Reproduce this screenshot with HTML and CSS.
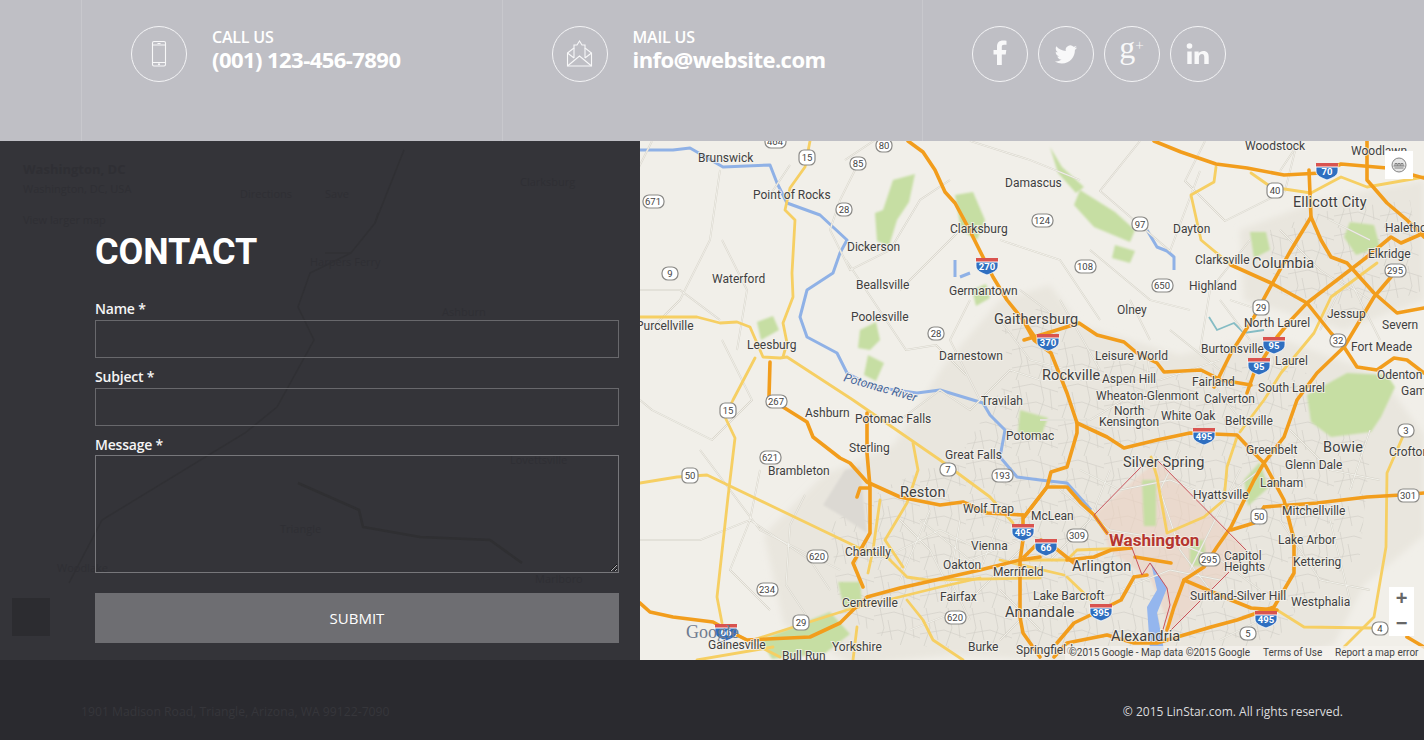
FILE: index.html
```html
<!DOCTYPE html>
<html lang="en">
<head>
<meta charset="utf-8">
<title>Contact</title>
<link rel="stylesheet" href="styles.css">
</head>
<body>
<header class="topbar">
  <div class="col">
    <span class="ring"><svg class="ico" viewBox="0 0 54 54"><rect x="20.500" y="14.500" width="13" height="24.500" rx="1.500"/><path d="M25.500 16.500h3M20.500 18h13M20.500 35.500h13"/><circle cx="27" cy="37.200" r=".5"/></svg></span>
    <div class="info"><div class="info-small">CALL US</div><div class="info-big">(001) 123-456-7890</div></div>
  </div>
  <div class="col">
    <span class="ring"><svg class="ico" viewBox="0 0 54 54"><path d="M14.500 26L21 21V18H24L26.500 14 29 18H32V21L38.500 26V39H14.500Z"/><path d="M14.500 26L21 31M38.500 26L32 31M21 21V31M32 21V31M14.500 39L26.500 29 38.500 39"/></svg></span>
    <div class="info"><div class="info-small">MAIL US</div><div class="info-big">info@website.com</div></div>
  </div>
  <div class="col social">
    <span class="ring"><svg class="glyph" viewBox="0 0 54 54"><path d="M24 38V27.500h-3.500V23H24v-3.500c0-4 2.400-6 6-6 1.600 0 3 .1 3.500.2v4.100h-2.400c-1.900 0-2.300.9-2.300 2.200V23h4.500l-.6 4.500h-3.900V38z"/></svg></span>
    <span class="ring"><svg class="glyph" viewBox="-17 -17.500 58 58"><path d="M23.953 4.570a10 10 0 01-2.825.775 4.958 4.958 0 002.163-2.723c-.951.555-2.005.959-3.127 1.184a4.920 4.920 0 00-8.384 4.482C7.690 8.095 4.067 6.130 1.640 3.162a4.822 4.822 0 00-.666 2.475c0 1.710.870 3.213 2.188 4.096a4.904 4.904 0 01-2.228-.616v.060a4.923 4.923 0 003.946 4.827 4.996 4.996 0 01-2.212.085 4.936 4.936 0 004.604 3.417 9.867 9.867 0 01-6.102 2.105c-.390 0-.779-.023-1.170-.067a13.995 13.995 0 007.557 2.209c9.053 0 13.998-7.496 13.998-13.985 0-.210 0-.420-.015-.630A9.935 9.935 0 0024 4.590z"/></svg></span>
    <span class="ring gplus">g<small>+</small></span>
    <span class="ring"><svg class="glyph" viewBox="0 0 54 54"><circle cx="18.500" cy="19" r="2.800"/><path d="M16.300 24.500h4.400V37h-4.400zM23.500 24.500h4.200v1.900c.9-1.400 2.600-2.300 4.600-2.300 4.100 0 5.400 2.500 5.400 6V37h-4.400v-6.600c0-1.900-.5-3.300-2.300-3.300-1.900 0-3.100 1.300-3.100 3.300V37h-4.400z"/></svg></span>
  </div>
</header>

<main class="main">
  <section class="panel">
    <svg class="ghost" viewBox="0 0 640 519" aria-hidden="true">
      <g class="ghost-roads">
        <path d="M404 9L375 82 351 112 310 132 298 166 314 199 277 266 245 292 102 379 69 442"/>
        <path class="ghost-main" d="M298 342L359 369 363 386 420 396 490 399 522 422"/>
        <path d="M351 112H325M375 82l3-10"/>
      </g>
      <g class="ghost-text">
        <text class="ghost-title" x="23" y="33">Washington, DC</text>
        <text x="23" y="52">Washington, DC, USA</text>
        <text x="23" y="83">View larger map</text>
        <text x="240" y="57">Directions</text>
        <text x="325" y="57">Save</text>
        <text x="520" y="45">Clarksburg</text>
        <text x="310" y="125">Harpers Ferry</text>
        <text x="442" y="175">Ashburn</text>
        <text x="510" y="323">Lovettsville</text>
        <text x="280" y="392">Triangle</text>
        <text x="57" y="431">Woodlake</text>
        <text x="535" y="442">Marlboro</text>
      </g>
      <rect class="ghost-box" x="12" y="457" width="38" height="38"/>
    </svg>
    <form class="form">
      <h1 class="title">CONTACT</h1>
      <label class="lab" for="f-name">Name *</label>
      <input class="field" id="f-name" type="text">
      <label class="lab" for="f-subject">Subject *</label>
      <input class="field" id="f-subject" type="text">
      <label class="lab lab-last" for="f-message">Message *</label>
      <textarea class="area" id="f-message"></textarea>
      <button class="submit" type="button">SUBMIT</button>
    </form>
  </section>

  <section class="map">
    <svg class="map-svg" viewBox="640 141 784 519">
      <defs>
        <filter id="blur" x="-20%" y="-20%" width="140%" height="140%"><feGaussianBlur stdDeviation="3"/></filter>
        <filter id="soft" x="-20%" y="-20%" width="140%" height="140%"><feGaussianBlur stdDeviation="1"/></filter>
        <pattern id="streets" width="46" height="38" patternUnits="userSpaceOnUse">
          <path class="street-lines" d="M0 8L20 4 46 12M6 0L10 20 4 38M0 26L24 22 46 30M28 0L32 20 26 38M14 12L18 32M38 10L40 30"/>
        </pattern>
        <g id="ih"><path class="ih-b" d="M-11-6H11V1C11 6 5 8 0 10-5 8-11 6-11 1z"/><path class="ih-r" d="M-11-7H11V-3H-11z"/><path class="ih-w" d="M-11-3H11"/></g>
        <g id="mn">
          <path d="M652 141l-15 30M720 170l-10 70-30 60-30 30M722 240l25 50-10 60M790 165l-20 30M845 160l30-20M860 160l-20 40-10 30 20 40 40-20 30-50 30-20M846 260l40 60 20 30 30-5 30 30M900 290l60-60M640 290l40 0 40 30M722 340l30 60-40 40-60-30-12-10M700 450l60 80 80 40M640 540l60 0 50-20 60 40 20 30M760 470l-10 50-20 50 40 40M805 495l-15 30-4 60 20 30M900 420l40-30 30 20 40-40 30 10M970 300l-20 40 30 60M1060 300l40 70M1090 250l60 50 40 10M1080 180l-50-20-60-19M1140 141l-40 50 70 60 30-80M1000 240l60 20 40 60M1130 300l20 40M1205 141l-20 40 40 40 60-30 10-40M1250 240l-40 50-10 60M1170 330l50 40M1220 300l30 40M1280 230l40 40 30 20M1300 141l-20 30M1350 280l30 60M1370 430l-20 60M1290 430l40 40 50 10M1280 520l40 60 50 10M1330 520l20 80M1220 640l40-20M1000 640l30-30 40-10M970 600l50-50M910 630l50-20M920 520l50 40 50-20"/>
          <path d="M1080 470l40 20 50-10 50 20 40-30M1060 490l50 40 60 10 50 20 40 30M1110 470l-20 50-40 40M1180 450l-20 40 20 60 30 40M1240 470l-30 60-20 40M1120 590l50-20 50 10M900 520l30 30 20 40M930 510l-30 70M960 520l-10 60 20 40M1000 520l-20 50M1000 590l40 40M880 560l60-30 40 20M1040 420l50 0 50-30M1080 380l80 0 60-20M1150 350l-10 80M1210 380l30 40M1230 300l30 10M1330 220l40 20M1340 280l30 20M1340 290l-20 40M1020 290l40 30M1000 320l30 40 40 10"/>
        </g>
      </defs>

      <rect x="640" y="141" width="784" height="519" class="land"/>

      <g class="urban" filter="url(#blur)">
        <path d="M1000 300l50-15 30 40 100 30 90-20 110 40 44 60v100l-60 50-30 60-60 20-150 0-170-10-100 10-70-40-20-90 60-60 70-30 50-80z"/>
        <path d="M1240 230l80-30 104-20v120l-80 30-100-30z"/>
      </g>
      <g fill="url(#streets)">
        <path d="M1000 320l50-15 30 40 100 30 90-20 80 40 20 60-10 100-60 50-20 30-60 20-150 0-170-10-60-30-10-90 60-40 70-30 50-80z"/>
        <path d="M1270 230l60-20 80-10 14 90-80 30-70-30z"/>
      </g>
      <path class="dc" d="M1094 515l63-55 89 90-17 22-58 58-20-50-42-30-7-25z" filter="url(#soft)"/>
      <path class="airport" d="M860 467L867 533 840 515 823 505 845 470Z" filter="url(#soft)"/>

      <g class="green" filter="url(#soft)">
        <path d="M893 180l22-6-6 28-12 18-8 26-12-5-2-28 8-3z"/>
        <path d="M955 195l18-3 12 28-8 20-16-10z"/>
        <path d="M1080 190l35 22 20 18-5 12-36-15-20-22z"/>
        <path d="M1050 147l12 20 22 20-8 6-18-20z"/>
        <path d="M1115 245l20 6-5 12-18-5z"/>
        <path d="M860 330l16-8 4 18-10 10-12-2z"/>
        <path d="M757 322l16-6 6 14-18 10z"/>
        <path d="M1307 395l40-22 40 2 8 12-14 30-10 15-40 5-20-15z"/>
        <path d="M1350 222l24 3 6 22-24 8-12-18z"/>
        <path d="M1250 232l16 0 4 18-16 8z"/>
        <path d="M760 640l70-28 20 22-26 20-52 5z"/>
        <path d="M838 582l22 0 2 22-18 5z"/>
        <path d="M1190 540l14 0 2 26-16 0z"/>
        <path d="M1142 480l14 0 0 46-12 0z"/>
        <path d="M1244 480l16-18 8 26-20 18z"/>
        <path d="M1020 410l28 8-8 20-22-5z"/>
        <path d="M868 355l16 8-8 18-12-6z"/>
        <path d="M972 290l14-6 4 14-14 8z"/>
      </g>

      <g class="water-thin">
        <path d="M640 150L673 150 690 148 723 167 770 165 777 183 787 203 820 215 847 240 840 253 833 273 807 290 800 317 807 337 837 353 847 373 873 387 917 393 940 390 983 403 990 415 1005 430 1000 457 1017 477 1040 480 1067 483 1091 510"/>
      </g>
      <g class="water">
        <path d="M1147 230l10 17 10 4 7 6 0 13"/>
        <path d="M955 260v17M960 277l10-4"/>
      </g>
      <path class="water-teal" d="M1209 317L1217 330 1234 323 1244 333 1264 330"/>
      <path class="water-fill" d="M1151 563L1167 588 1157 613 1164 650 1150 650 1147 607 1157 590Z"/>

      <use href="#mn" class="minor-case"/>
      <use href="#mn" class="minor-fill"/>

      <g class="yellow">
        <path d="M810 141L805 167 790 188 785 210 795 220 792 273 793 297 783 323 787 343 783 357"/>
        <path d="M640 317H697L720 323 737 322 750 327 763 357 780 358 787 357 853 400 940 460 990 497 1013 523"/>
        <path d="M755 358L733 400 725 417 735 438 728 497 717 597 722 623"/>
        <path d="M640 483L677 477 707 475 857 547 887 557 907 577 927 580 1040 578"/>
        <path d="M753 640L847 610 940 587 980 578"/>
        <path d="M913 443L918 470 907 503 885 540 903 567M880 500L873 550 868 573M857 627L853 660M907 600L923 620 933 640 963 660"/>
        <path d="M697 660L773 647M733 633L780 657"/>
        <path d="M1216 167L1214 182 1191 195 1201 240 1231 265"/>
        <path d="M1251 173L1271 187 1311 193 1341 177 1367 187 1424 177"/>
        <path d="M1377 263L1331 297 1314 333 1281 373 1264 400 1240 432"/>
        <path d="M1237 437L1227 467 1224 500 1204 517 1167 533 1157 477 1151 457"/>
        <path d="M1407 427L1387 473 1386 547 1374 617 1344 647"/>
        <path d="M1277 610L1304 627 1371 628"/>
        <path d="M1024 560H1067L1077 550 1131 548M1067 577L1091 600M1000 560L1064 575"/>
      </g>
      <g class="orange">
        <path d="M908 141L923 152 935 170 945 192 955 203 968 227 983 257 993 277 1007 300 1023 320 1037 340"/>
        <path d="M1024 322L1034 340 1051 353 1067 393 1077 423 1077 433 1067 467 1051 472 1047 487 1024 517"/>
        <path d="M1077 423L1107 437 1124 448 1157 440 1190 433 1237 435 1251 450 1264 463 1284 500 1294 540 1294 573 1274 607 1257 613 1237 620 1211 627 1184 635 1157 643 1134 643 1107 635 1067 643 1054 657"/>
        <path d="M1040 557L1020 560 980 570 900 588 867 597 853 610 840 623 810 637 747 640 733 633 713 622 673 617 650 612 640 603"/>
        <path d="M783 407L807 422 813 437 840 458 850 463 867 482 900 497 940 505 963 502 987 513 1023 515"/>
        <path d="M867 413V453L870 487V533L853 563 863 587M857 497L860 488H870M770 362L769 397"/>
        <path d="M1154 141L1181 152 1216 164 1247 168 1284 175 1321 173 1341 164 1387 168 1424 178"/>
        <path d="M1367 141V180L1387 203 1407 220 1424 237"/>
        <path d="M1309 170L1311 217 1291 250 1267 293 1254 317 1231 353 1214 387"/>
        <path d="M1311 217L1321 240 1331 257 1347 263 1374 293 1397 313 1424 308"/>
        <path d="M1231 265L1271 283 1307 303 1331 333 1344 347 1357 367 1377 370 1394 358 1407 360 1424 373"/>
        <path d="M1391 277L1374 297 1344 347 1317 373 1297 400 1284 437 1264 463 1254 480 1231 527 1217 547 1204 567 1184 580 1174 607 1167 630"/>
        <path d="M1367 257L1307 303 1291 320 1277 337 1254 373 1247 393"/>
        <path d="M1367 257L1391 237 1401 243 1424 233"/>
        <path d="M1024 340L1057 330 1079 323 1097 335 1124 342 1137 353 1157 363 1164 372 1201 370 1221 380 1251 385"/>
        <path d="M1264 507L1317 503 1367 497 1401 495 1424 493M1231 530L1254 523 1264 507"/>
        <path d="M1184 580L1231 600 1251 608 1277 610M1407 637L1424 647"/>
        <path d="M1024 517L1047 487H1067L1081 503 1094 515 1107 533"/>
        <path d="M1067 560L1094 557 1111 550 1131 548M1134 577L1121 600 1101 610 1074 623 1057 643M1134 577L1147 575M1171 563L1135 557"/>
        <path d="M1023 515V540L1020 560V617L1023 633 1040 657M1024 557L1041 540 1054 547 1074 563"/>
      </g>

      <path class="dc-line" d="M1094 515L1141 467M1157 460L1246 550M1229 572L1171 630M1094 515L1107 533 1132 548 1142 575 1150 563 1167 588 1170 605 1160 640"/>

      <g class="lbl">
        <text x="1245" y="150">Woodstock</text><text x="1351" y="155">Woodlawn</text>
        <text x="698" y="162">Brunswick</text><text x="753" y="199">Point of Rocks</text>
        <text x="1005" y="187">Damascus</text><text x="950" y="233">Clarksburg</text>
        <text x="847" y="251">Dickerson</text><text x="712" y="283">Waterford</text>
        <text x="856" y="289">Beallsville</text><text x="949" y="295">Germantown</text>
        <text x="851" y="321">Poolesville</text><text x="1117" y="314">Olney</text>
        <text x="1173" y="233">Dayton</text><text x="1195" y="264">Clarksville</text>
        <text x="1189" y="290">Highland</text><text x="1368" y="258">Elkridge</text>
        <text x="1385" y="232">Halethorpe</text><text x="1327" y="318">Jessup</text>
        <text x="1244" y="327">North Laurel</text><text x="1382" y="329">Severn</text>
        <text x="1351" y="351">Fort Meade</text><text x="1201" y="353">Burtonsville</text>
        <text x="1275" y="365">Laurel</text><text x="1377" y="379">Odenton</text>
        <text x="1258" y="392">South Laurel</text><text x="1401" y="395">Gambrills</text>
        <text x="1192" y="386">Fairland</text><text x="1095" y="360">Leisure World</text>
        <text x="1102" y="383">Aspen Hill</text><text x="1096" y="400">Wheaton-Glenmont</text>
        <text x="1204" y="403">Calverton</text><text x="1114" y="415">North</text>
        <text x="1099" y="426">Kensington</text><text x="1161" y="420">White Oak</text>
        <text x="1225" y="425">Beltsville</text><text x="1246" y="454">Greenbelt</text>
        <text x="1389" y="456">Crofton</text><text x="1285" y="469">Glenn Dale</text>
        <text x="1260" y="487">Lanham</text><text x="1193" y="499">Hyattsville</text>
        <text x="1282" y="515">Mitchellville</text><text x="1031" y="520">McLean</text>
        <text x="1278" y="544">Lake Arbor</text><text x="1224" y="560">Capitol</text>
        <text x="1224" y="571">Heights</text><text x="1293" y="566">Kettering</text>
        <text x="1033" y="600">Lake Barcroft</text><text x="1190" y="600">Suitland-Silver Hill</text>
        <text x="1291" y="606">Westphalia</text><text x="1006" y="440">Potomac</text>
        <text x="981" y="405">Travilah</text><text x="939" y="360">Darnestown</text>
        <text x="747" y="349">Leesburg</text><text x="636" y="330">Purcellville</text>
        <text x="805" y="417">Ashburn</text><text x="855" y="423">Potomac Falls</text>
        <text x="849" y="452">Sterling</text><text x="945" y="459">Great Falls</text>
        <text x="768" y="475">Brambleton</text><text x="963" y="513">Wolf Trap</text>
        <text x="971" y="550">Vienna</text><text x="943" y="569">Oakton</text>
        <text x="993" y="576">Merrifield</text><text x="845" y="556">Chantilly</text>
        <text x="940" y="601">Fairfax</text><text x="842" y="607">Centreville</text>
        <text x="832" y="651">Yorkshire</text>
        <text x="782" y="660">Bull Run</text><text x="968" y="651">Burke</text>
        <text x="1016" y="654">Springfield</text>
      </g>
      <g class="lbl lbl-big">
        <text x="994" y="324">Gaithersburg</text><text x="1293" y="207">Ellicott City</text>
        <text x="1252" y="268">Columbia</text><text x="1042" y="380">Rockville</text>
        <text x="1323" y="452">Bowie</text><text x="1123" y="467">Silver Spring</text>
        <text x="1072" y="571">Arlington</text><text x="1005" y="617">Annandale</text>
        <text x="1111" y="641">Alexandria</text><text x="900" y="497">Reston</text>
      </g>
      <text class="lbl-dc" x="1109" y="546">Washington</text>
      <text class="lbl-river" transform="translate(843 381) rotate(16)">Potomac River</text>

      <g class="sh">
        <rect x="765" y="134" width="21" height="14" rx="6"/><rect x="799" y="150" width="16" height="15" rx="5"/><rect x="850" y="157" width="16" height="13" rx="6"/><rect x="876" y="139" width="16" height="13" rx="6"/>
        <rect x="643" y="195" width="21" height="13" rx="6"/><rect x="836" y="203" width="16" height="13" rx="6"/><rect x="662" y="267" width="16" height="13" rx="6"/><rect x="928" y="327" width="16" height="13" rx="6"/>
        <rect x="1032" y="214" width="21" height="13" rx="6"/><rect x="1132" y="217" width="16" height="14" rx="6"/><rect x="1075" y="260" width="21" height="13" rx="6"/><rect x="1152" y="279" width="21" height="13" rx="6"/>
        <rect x="1267" y="183" width="16" height="15" rx="5"/><rect x="1253" y="300" width="16" height="15" rx="5"/><rect x="1385" y="264" width="21" height="13" rx="6"/><rect x="1330" y="334" width="16" height="13" rx="6"/>
        <rect x="720" y="403" width="16" height="15" rx="5"/><rect x="766" y="395" width="21" height="13" rx="6"/><rect x="760" y="451" width="21" height="13" rx="6"/><rect x="682" y="468" width="16" height="15" rx="5"/>
        <rect x="940" y="463" width="16" height="13" rx="6"/><rect x="992" y="469" width="21" height="13" rx="6"/><rect x="807" y="550" width="21" height="13" rx="6"/><rect x="757" y="583" width="21" height="13" rx="6"/>
        <rect x="793" y="615" width="16" height="15" rx="5"/><rect x="945" y="611" width="21" height="13" rx="6"/><rect x="1067" y="529" width="21" height="13" rx="6"/><rect x="1251" y="509" width="16" height="15" rx="5"/>
        <rect x="1199" y="553" width="21" height="13" rx="6"/><rect x="1398" y="489" width="21" height="13" rx="5"/><rect x="1398" y="424" width="16" height="13" rx="6"/><rect x="1240" y="627" width="16" height="13" rx="6"/><rect x="1372" y="622" width="16" height="13" rx="6"/>
      </g>
      <g class="sh-t">
        <text x="775" y="145">464</text><text x="807" y="161">15</text><text x="858" y="167">85</text><text x="884" y="149">80</text>
        <text x="653" y="205">671</text><text x="844" y="213">28</text><text x="670" y="277">9</text><text x="936" y="337">28</text>
        <text x="1042" y="224">124</text><text x="1140" y="228">97</text><text x="1085" y="270">108</text><text x="1162" y="289">650</text>
        <text x="1275" y="194">40</text><text x="1261" y="311">29</text><text x="1395" y="274">295</text><text x="1338" y="344">32</text>
        <text x="728" y="414">15</text><text x="776" y="405">267</text><text x="770" y="461">621</text><text x="690" y="479">50</text>
        <text x="948" y="473">7</text><text x="1002" y="479">193</text><text x="817" y="560">620</text><text x="767" y="593">234</text>
        <text x="801" y="626">29</text><text x="955" y="621">620</text><text x="1077" y="539">309</text><text x="1259" y="520">50</text>
        <text x="1209" y="563">295</text><text x="1408" y="499">301</text><text x="1406" y="434">3</text><text x="1248" y="637">5</text><text x="1380" y="632">4</text>
      </g>
      <use href="#ih" x="987" y="265"/><use href="#ih" x="1327" y="170"/><use href="#ih" x="1274" y="344"/><use href="#ih" x="1259" y="365"/>
      <use href="#ih" x="1048" y="341"/><use href="#ih" x="1023" y="531"/><use href="#ih" x="1046" y="546"/>
      <use href="#ih" x="726" y="631"/><use href="#ih" x="1101" y="611"/><use href="#ih" x="1204" y="435"/><use href="#ih" x="1266" y="618"/>
      <g class="ih-t">
        <text x="987" y="270">270</text><text x="1327" y="175">70</text><text x="1274" y="349">95</text><text x="1259" y="370">95</text>
        <text x="1048" y="346">370</text><text x="1023" y="536">495</text><text x="1046" y="551">66</text><text x="726" y="636">66</text>
        <text x="1101" y="616">395</text><text x="1204" y="440">495</text><text x="1266" y="623">495</text>
      </g>
      <text class="g-logo" x="686" y="638">Google</text>
      <text class="lbl-over" x="708" y="649">Gainesville</text>
    </svg>

    <div class="attr">
      <span class="attr-data">©2015 Google - Map data ©2015 Google</span>
      <span class="attr-terms">Terms of Use</span>
      <span class="attr-report">Report a map error</span>
    </div>
    <div class="tilt"><svg viewBox="0 0 28 28"><circle cx="14" cy="14" r="7"/><path d="M8.500 15h11M10 15v-2.500h2V15M13 15v-2.500h2V15M16 15v-2.500h2V15M9.500 17h9"/></svg></div>
    <div class="zoom"><span class="zoom-btn">+</span><span class="zoom-btn">−</span></div>
  </section>
</main>

<footer class="footer">
  <span class="addr">1901 Madison Road, Triangle, Arizona, WA 99122-7090</span>
  <span class="copy">© 2015 LinStar.com. All rights reserved.</span>
</footer>
</body>
</html>
```
FILE: styles.css
```css
* { box-sizing: border-box; }
html, body { margin: 0; padding: 0; }
body { width: 1424px; height: 740px; overflow: hidden; font-family: "Open Sans", sans-serif; background: #2a2a2f; color: #fff; }

.topbar { height: 141px; background: #bfbfc5; display: flex; padding-left: 81px; }
.col { width: 420.500px; border-left: 1px solid #c8c8cd; padding: 26px 0 0 49px; display: flex; align-items: flex-start; gap: 25px; }
.ring { width: 56px; height: 56px; flex: none; border: 1px solid #f4f4f6; border-radius: 50%; display: block; }
.ico { width: 54px; height: 54px; display: block; fill: none; stroke: #f8f8f9; stroke-width: 1.100; }
.glyph { width: 54px; height: 54px; display: block; fill: #f8f8f9; }
.info-small { font-size: 16px; line-height: 20px; font-weight: 600; letter-spacing: -.2px; }
.info-big { font-size: 22px; line-height: 26px; font-weight: 700; letter-spacing: -.55px; margin-top: -1px; }
.info { margin-top: 1px; }
.social { gap: 10px; }
.gplus { font-family: "Liberation Serif", serif; font-size: 32px; line-height: 37px; text-align: center; color: #f8f8f9; padding-right: 1px; white-space: nowrap; }
.gplus small { font-family: "Open Sans", sans-serif; font-size: 15px; font-weight: 300; vertical-align: 7px; }

.main { display: flex; height: 519px; }
.panel { width: 640px; position: relative; background: #343439; }
.ghost { position: absolute; left: 0; top: 0; width: 640px; height: 519px; }
.ghost-roads { fill: none; stroke: #303034; stroke-width: 1.500; }
.ghost-main { stroke: #2f2f32; stroke-width: 2.500; }
.ghost-text { font: 11px "Open Sans", sans-serif; fill: #2f2f34; }
.ghost-title { font-weight: 700; font-size: 13px; }
.ghost-box { fill: #2c2c30; }
.form { position: relative; display: flex; flex-direction: column; align-items: flex-start; padding: 89px 0 0 95px; width: 619px; }
.title { margin: 0 0 26px; font: 700 36px/44px Roboto, sans-serif; letter-spacing: -.1px; color: #fff; }
.lab { font-size: 14px; line-height: 18px; font-weight: 600; letter-spacing: -.2px; color: #f4f4f5; height: 20px; }
.lab-last { height: 19px; }
.field, .area { display: block; width: 524px; background: transparent; border: 1px solid #68686c; border-radius: 0; padding: 0; outline: none; margin: 0; }
.field { height: 38px; margin-bottom: 10px; }
.area { height: 118px; border-color: #77777b; margin-bottom: 20px; }
.submit { width: 524px; height: 50px; background: #6e6e72; border: 0; color: #fff; font: 500 15px "Open Sans", sans-serif; padding: 0; }

.map { width: 784px; position: relative; overflow: hidden; }
.map-svg { display: block; width: 784px; height: 519px; }
.land { fill: #f1efe9; }
.urban path { fill: #e9e6de; }
.street-lines { fill: none; stroke: #d3d0c8; stroke-width: .7; }
.dc { fill: #ecd3c4; opacity: .65; }
.airport { fill: #dcd9d3; }
.green path { fill: #c6dea3; }
.water-thin, .water { fill: none; stroke: #8fb1e6; stroke-linejoin: round; }
.water-thin { stroke-width: 3; }
.water { stroke-width: 3; }
.water-teal { fill: none; stroke: #84bcc4; stroke-width: 1.800; }
.water-fill { fill: #94b6ee; }
.minor-case { fill: none; stroke: #d6d2c8; stroke-width: 1.800; }
.minor-fill { fill: none; stroke: #f8f7f3; stroke-width: .8; }
.yellow, .orange { fill: none; stroke-linejoin: round; stroke-linecap: round; }
.yellow { stroke: #f6cf63; stroke-width: 2.800; }
.orange { stroke: #f29d1c; stroke-width: 3.600; }
.dc-line { fill: none; stroke: #c9525a; stroke-width: 1; }
.lbl text, .lbl-over { font: 12px Roboto, sans-serif; fill: #3f3f3f; stroke: #f6f4ef; stroke-width: 2px; paint-order: stroke; stroke-opacity: .75; }
.lbl-big text { font-size: 14.500px; letter-spacing: .1px; }
.lbl-dc { font: 700 17px Roboto, sans-serif; fill: #b5352f; stroke: #f6efe6; stroke-width: 2px; paint-order: stroke; stroke-opacity: .8; }
.lbl-river { font: italic 12px Roboto, sans-serif; fill: #44649a; stroke: #f1efe9; stroke-width: 2px; paint-order: stroke; }
.sh rect { fill: #fff; stroke: #8a8986; stroke-width: 1.200; }
.sh-t text { font: 9.500px Roboto, sans-serif; text-anchor: middle; fill: #444; }
.ih-b { fill: #2f6fc0; stroke: #fff; stroke-width: .8; }
.ih-r { fill: #d9534f; }
.ih-w { stroke: #fff; stroke-width: 1; }
.ih-t text { font: 700 9.500px Roboto, sans-serif; text-anchor: middle; fill: #fff; }
.g-logo { font: 18px "Liberation Serif", serif; fill: #6f7b90; }

.attr { position: absolute; right: 0; bottom: 0; width: 359px; height: 14px; background: rgba(245,243,238,.72); display: flex; font: 10px/14px Roboto, sans-serif; color: #444; padding-left: 4px; }
.attr-data { width: 194px; }
.attr-terms { width: 72px; }
.tilt { position: absolute; left: 745px; top: 10px; width: 28px; height: 28px; background: #fff; }
.tilt svg { display: block; width: 28px; height: 28px; fill: #e6e6e6; stroke: #777; stroke-width: .9; }
.zoom { position: absolute; left: 749px; top: 446px; width: 25px; height: 49px; background: #fff; display: flex; flex-direction: column; }
.zoom-btn { height: 24.500px; font: 700 20px/23px "Liberation Sans", sans-serif; text-align: center; color: #666; }

.footer { height: 80px; background: #2a2a2f; display: flex; justify-content: space-between; align-items: center; padding: 22px 81px 0 81px; font-size: 12px; }
.addr { color: #36363b; font-size: 12.200px; }
.copy { color: #dcdcde; }
```
